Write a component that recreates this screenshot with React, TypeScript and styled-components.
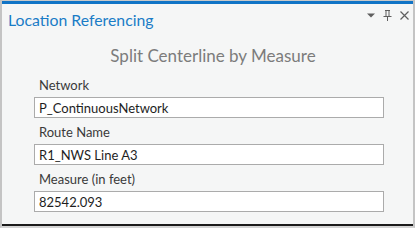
import React from 'react';
import styled, { createGlobalStyle } from 'styled-components';

const GlobalStyle = createGlobalStyle`
  html, body {
    margin: 0;
    padding: 0;
    background: #f5f6f6;
  }
  * {
    box-sizing: border-box;
  }
`;

const Pane = styled.div`
  width: 415px;
  height: 228px;
  display: flex;
  flex-direction: column;
  background: #f5f6f6;
  border-top: 1px solid #c9c9c9;
  border-left: 2px solid #c4c4c4;
  border-right: 2px solid #c4c4c4;
  border-bottom: 2px solid #d4d4d4;
  font-family: Lato, 'Noto Sans', sans-serif;
`;

const AccentBar = styled.div`
  height: 3px;
  background: #1174c6;
  flex-shrink: 0;
`;

const Header = styled.div`
  display: flex;
  align-items: flex-start;
  justify-content: space-between;
  height: 41px;
  padding: 5px 4px 0 6px;
  flex-shrink: 0;
`;

const Title = styled.div`
  color: #1a7cc6;
  font-size: 15.8px;
  line-height: 22px;
`;

const Controls = styled.div`
  display: flex;
  align-items: center;
  gap: 8px;
  padding-top: 1px;
`;

const Body = styled.div`
  flex: 1;
  display: flex;
  flex-direction: column;
  padding: 0 29px 0 32px;
  border-bottom: 2px solid #1b1b1b;
`;

const Heading = styled.div`
  text-align: center;
  color: #7c7c7c;
  font-size: 17px;
  line-height: 22px;
  padding-left: 8px;
  margin-bottom: 10px;
`;

const Field = styled.div`
  display: flex;
  flex-direction: column;
  margin-bottom: 6px;
`;

const Label = styled.div`
  color: #3a3a3a;
  font-size: 13px;
  line-height: 16px;
  padding-left: 5px;
  margin-bottom: 4px;
`;

const Input = styled.input`
  height: 21px;
  border: 1px solid #ababab;
  background: #ffffff;
  color: #1e1e1e;
  font-family: inherit;
  font-size: 13px;
  padding: 0 4px;
  outline: none;
`;

const fields = [
  { label: 'Network', value: 'P_ContinuousNetwork' },
  { label: 'Route Name', value: 'R1_NWS Line A3' },
  { label: 'Measure (in feet)', value: '82542.093' },
];

export default function App(): JSX.Element {
  return (
    <>
      <GlobalStyle />
      <Pane>
        <AccentBar />
        <Header>
          <Title>Location Referencing</Title>
          <Controls>
            <svg width="8" height="5" viewBox="0 0 8 5">
              <path d="M0 0.5 H8 L4 4.5 Z" fill="#5f5f5f" />
            </svg>
            <svg width="9" height="11" viewBox="0 0 9 11">
              <path d="M2 0.5 H7 M3 0.5 V6.5 M6 0.5 V6.5 M0.5 6.5 H8.5 M4.5 6.5 V11" stroke="#5f5f5f" strokeWidth="1" fill="none" />
            </svg>
            <svg width="9" height="9" viewBox="0 0 9 9">
              <path d="M0.5 0.5 L8.5 8.5 M8.5 0.5 L0.5 8.5" stroke="#5f5f5f" strokeWidth="1.2" fill="none" />
            </svg>
          </Controls>
        </Header>
        <Body>
          <Heading>Split Centerline by Measure</Heading>
          {fields.map(f => (
            <Field key={f.label}>
              <Label>{f.label}</Label>
              <Input type="text" defaultValue={f.value} readOnly />
            </Field>
          ))}
        </Body>
      </Pane>
    </>
  );
}
